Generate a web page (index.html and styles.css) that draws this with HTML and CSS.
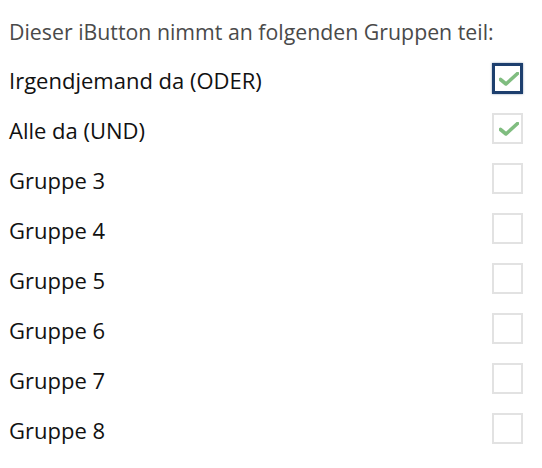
FILE: index.html
```html
<!DOCTYPE html>
<html lang="de">
<head>
<meta charset="utf-8">
<link rel="stylesheet" href="styles.css">
</head>
<body>
<div class="panel">
  <div class="title">Dieser iButton nimmt an folgenden Gruppen teil:</div>
  <ul class="groups">
    <li class="row"><span class="label">Irgendjemand da (ODER)</span><span class="box checked focused"><svg viewBox="0 0 20 14" class="tick"><polyline points="1.5,7.5 7,12 18.5,1.5"/></svg></span></li>
    <li class="row"><span class="label">Alle da (UND)</span><span class="box checked"><svg viewBox="0 0 20 14" class="tick"><polyline points="1.5,7.5 7,12 18.5,1.5"/></svg></span></li>
    <li class="row"><span class="label">Gruppe 3</span><span class="box"></span></li>
    <li class="row"><span class="label">Gruppe 4</span><span class="box"></span></li>
    <li class="row"><span class="label">Gruppe 5</span><span class="box"></span></li>
    <li class="row"><span class="label">Gruppe 6</span><span class="box"></span></li>
    <li class="row"><span class="label">Gruppe 7</span><span class="box"></span></li>
    <li class="row"><span class="label">Gruppe 8</span><span class="box"></span></li>
  </ul>
</div>
</body>
</html>
```
FILE: styles.css
```css
html, body {
  margin: 0;
  padding: 0;
  background: #ffffff;
}
.panel {
  padding: 17px 19px 0 9px;
  font-family: "Open Sans", "Noto Sans", sans-serif;
}
.title {
  font-size: 21.3px;
  line-height: 30px;
  color: #4a4a4a;
}
.groups {
  list-style: none;
  margin: 6px 0 0 0;
  padding: 0;
}
.row {
  display: flex;
  align-items: center;
  justify-content: space-between;
  height: 50px;
}
.label {
  font-size: 22px;
  color: #111111;
  padding-top: 3px;
}
.box {
  box-sizing: border-box;
  width: 31px;
  height: 31px;
  border: 2px solid #e2e2e2;
  background: #fff;
  display: flex;
  align-items: center;
  justify-content: center;
}
.box.focused {
  border: 3px solid #1d3f6e;
  box-shadow: 0 0 2px rgba(29, 63, 110, 0.5);
}
.tick {
  width: 20px;
  height: 14px;
  margin-left: 2px;
  margin-top: 1px;
}
.tick polyline {
  fill: none;
  stroke: #80bd80;
  stroke-width: 3.6;
  stroke-linecap: round;
  stroke-linejoin: round;
}
```
